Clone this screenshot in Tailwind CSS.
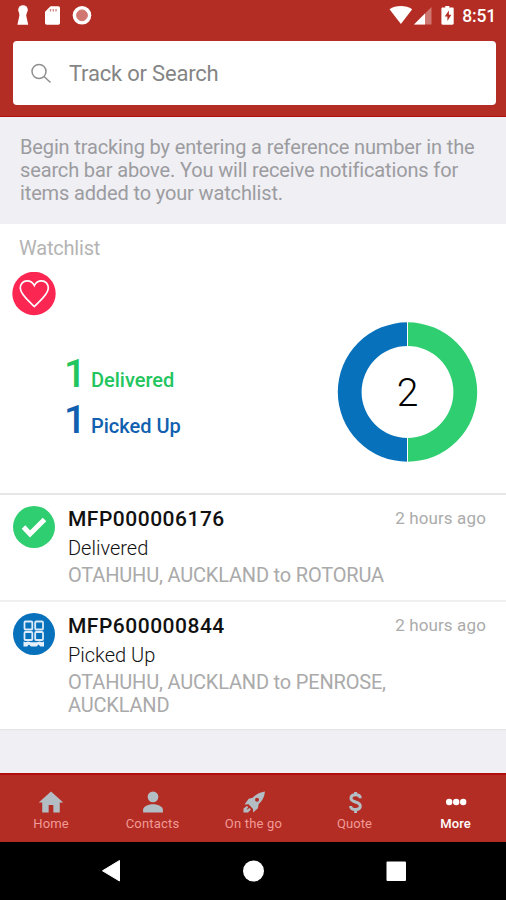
<!DOCTYPE html>
<html lang="en">
<head>
<meta charset="utf-8">
<title>Track or Search</title>
<script src="https://cdn.jsdelivr.net/npm/@tailwindcss/browser@4"></script>
</head>
<body class="w-[506px] h-[900px] overflow-hidden flex flex-col bg-[#efeff4] font-['Roboto',sans-serif]">
<header class="h-[117px] shrink-0 bg-[#b42d24] border-b border-[#b00d0c] flex flex-col">
  <div class="h-[41px] flex justify-between text-white">
    <svg class="w-[110px] h-[32px]" viewBox="0 0 110 32" fill="currentColor">
      <circle cx="23" cy="10" r="4.800"/><path d="M19 11h8l-.8 4.500 2 9.200H17.400l2-9.200z"/>
      <path d="M50.500 6.300h7.800a1.700 1.700 0 0 1 1.700 1.700v15a1.700 1.700 0 0 1-1.700 1.700H46.700A1.700 1.700 0 0 1 45 23V11.800z"/>
      <path d="M50.500 9v2.500M53.300 9v2.500M56 9v2.500" stroke="#b42d24" stroke-width="1.300" opacity=".6"/>
      <circle cx="82" cy="15.300" r="9.300"/><circle cx="82" cy="15.300" r="5.400" fill="#cf7770" stroke="#d2756e"/>
    </svg>
    <div class="flex pr-[10px]">
      <svg class="w-[70px] h-[32px]" viewBox="388 0 70 32" fill="currentColor">
        <path d="M390.500 9.200C396.500 4.900 407 4.900 413.200 9.200L401.900 24z"/>
        <path d="M432.500 7v17.500H415z" opacity=".35"/><path d="M426 13.500v11h-11z"/>
        <path d="M446.300 6h4v1.600h3.100c.8 0 1.300.5 1.300 1.200v14.700c0 .7-.5 1.200-1.300 1.200h-9.700c-.8 0-1.300-.5-1.300-1.200V8.800c0-.7.5-1.200 1.300-1.200h2.600z"/>
        <path d="M449.900 10.500l-4.200 6h2.700v4.500l4-6.200h-2.500z" fill="#b42d24"/>
      </svg>
      <div class="pt-[6px] pl-[5px] text-[17.500px] leading-[20px] tracking-[-0.200px] font-medium">8:51</div>
    </div>
  </div>
  <div class="ml-[13px] mr-[10px] h-[64px] rounded-[4px] bg-white flex items-center pl-[17px] text-[#858585] text-[22px] tracking-[-0.200px]">
    <svg class="w-[22px] h-[22px] mr-[17px]" viewBox="0 0 22 22" fill="none" stroke="#8f8f8f" stroke-width="1.500"><circle cx="9" cy="9.500" r="7"/><path d="M14 14.500l6.500 6"/></svg>
    <span>Track or Search</span>
  </div>
</header>
<p class="h-[107px] shrink-0 pt-[19px] pl-[20px] text-[20px] leading-[23px] tracking-[-0.140px] text-[#9c9ca0]">Begin tracking by entering a reference number in the<br>search bar above. You will receive notifications for<br>items added to your watchlist.</p>
<section class="h-[269px] shrink-0 bg-white">
  <h2 class="h-[48px] pt-[12px] pl-[19px] text-[20px] leading-[24px] tracking-[-0.200px] text-[#b4b4b4]">Watchlist</h2>
  <svg class="w-[44px] h-[44px] ml-[12px]" viewBox="0 0 44 44"><circle cx="22" cy="21.500" r="21.700" fill="#fc2653"/><path d="M22.300 34.500C18 30 8.300 22.500 8.300 16.200C8.300 12 11.200 8.800 15 8.800C18.600 8.800 21 10.800 22.300 13.500C23.600 10.800 26 8.800 29.600 8.800C33.400 8.800 36.300 12 36.300 16.200C36.300 22.500 26.600 30 22.300 34.500z" fill="none" stroke="#fff" stroke-width="1.700"/></svg>
  <div class="flex justify-between pl-[64px] pr-[28px]">
    <div class="pt-[35px]">
      <div class="h-[46px] flex items-baseline gap-[7px] text-[#22c55e] font-medium"><span class="text-[39px] leading-[46px] w-[20px]">1</span><span class="text-[20px]">Delivered</span></div>
      <div class="h-[46px] flex items-baseline gap-[7px] text-[#1160b0] font-medium"><span class="text-[39px] leading-[46px] w-[20px]">1</span><span class="text-[20px]">Picked Up</span></div>
    </div>
    <svg class="w-[141px] h-[152px]" viewBox="337 316 141 152">
      <path d="M407.500 322.300a69.700 69.700 0 0 0 0 139.400v-23.800a45.900 45.900 0 0 1 0-91.800z" fill="#0871bc"/>
      <path d="M407.500 322.300a69.700 69.700 0 0 1 0 139.400v-23.800a45.900 45.900 0 0 0 0-91.800z" fill="#2fce70"/>
      <path d="M407.500 322v24M407.500 438v24" stroke="#fff"/>
      <text x="407.500" y="406" text-anchor="middle" font-size="39" font-weight="300" fill="#000">2</text>
    </svg>
  </div>
</section>
<article class="h-[107px] shrink-0 bg-white border-t-2 border-[#e6e6e6] flex pl-[12px] pr-[20px]">
  <svg class="w-[44px] h-[44px] mt-[10px] mr-[12px] shrink-0" viewBox="0 0 44 44"><circle cx="22" cy="22" r="21" fill="#2fce70"/><path d="M11.500 22l6.500 7 14.500-14.500" fill="none" stroke="#fff" stroke-width="5"/></svg>
  <div class="grow pt-[10px]">
    <div class="flex justify-between"><h3 class="text-[21px] leading-[28px] tracking-[0.500px] font-medium text-[#111]">MFP000006176</h3><span class="text-[17px] leading-[26px] tracking-[0.130px] text-[#ababab]">2 hours ago</span></div>
    <div class="text-[20px] leading-[30px] font-light text-[#111]">Delivered</div>
    <div class="text-[20px] leading-[23px] mt-[1px] tracking-[-0.180px] text-[#aaa]">OTAHUHU, AUCKLAND to ROTORUA</div>
  </div>
</article>
<article class="h-[129px] shrink-0 bg-white border-t-2 border-[#efefef] flex pl-[12px] pr-[20px] shadow-[0_1px_1px_#e4e4e8]">
  <svg class="w-[44px] h-[44px] mt-[10px] mr-[12px] shrink-0" viewBox="0 0 44 44"><circle cx="22" cy="22" r="21" fill="#0871bc"/><g fill="none" stroke="#dcebf7" stroke-width="1.800"><rect x="12.500" y="9.500" width="7.800" height="8" rx="1"/><rect x="23.200" y="9.500" width="7.800" height="8" rx="1"/><rect x="12.500" y="20" width="7.800" height="8" rx="1"/><rect x="23.200" y="20" width="7.800" height="8" rx="1"/></g><path d="M11.500 29.500l2 .8 2.500-.8 2.800.8h6l2.700-.8 2.500.8 2-.8v5h-3.500l-2-2-2 2h-5.500l-2-2-2 2h-3.500z" fill="#e4f0fa"/></svg>
  <div class="grow pt-[10px]">
    <div class="flex justify-between"><h3 class="text-[21px] leading-[28px] tracking-[0.500px] font-medium text-[#111]">MFP600000844</h3><span class="text-[17px] leading-[26px] tracking-[0.130px] text-[#ababab]">2 hours ago</span></div>
    <div class="text-[20px] leading-[30px] font-light text-[#111]">Picked Up</div>
    <div class="text-[20px] leading-[23px] mt-[1px] tracking-[-0.180px] text-[#aaa]">OTAHUHU, AUCKLAND to PENROSE,<br>AUCKLAND</div>
  </div>
</article>
<nav class="mt-auto h-[69px] shrink-0 bg-[#b42d24] border-t-2 border-[#b00d0c] flex text-[13px] leading-[16px] text-[#f19a96] text-center">
  <div class="w-[102px] flex flex-col items-center pt-[13px]"><svg class="w-[28px] h-[28px]" viewBox="0 0 24 24" fill="#b3bec4"><path d="M10 21v-6.500h4V21h5.500v-8.500h3L12 3 1.500 12.500h3V21z"/></svg><span class="tracking-[0.100px]">Home</span></div>
  <div class="w-[101px] flex flex-col items-center pt-[13px]"><svg class="w-[28px] h-[28px]" viewBox="0 0 24 24" fill="#b3bec4"><circle cx="12" cy="7.600" r="4.600"/><path d="M3.500 21v-2.500c0-3 5.500-4.600 8.500-4.600s8.500 1.600 8.500 4.600V21z"/></svg><span class="tracking-[0.200px]">Contacts</span></div>
  <div class="w-[101px] flex flex-col items-center pt-[13px]"><svg class="w-[28px] h-[28px]" viewBox="0 0 28 28" fill="#b3bec4"><path fill-rule="evenodd" d="M25 3.500c-5.500.8-9.500 3-12.300 6.300l-4 1-4.200 5.700 4-.3L13 21l.2 3.500 4.700-4.200.8-4.300C22 13.500 24.300 9.500 25 3.500zM17 9.800a2 2 0 1 1 0 4 2 2 0 0 1 0-4z"/><path d="M6.800 18l1.500 1-2 3 3.500-2 1 1.500-2.800 3H3.500v-4z"/></svg><span class="tracking-[0.200px]">On the go</span></div>
  <div class="w-[101px] flex flex-col items-center pt-[13px]"><svg class="w-[28px] h-[28px]" viewBox="0 0 28 28" fill="none" stroke="#b3bec4" stroke-width="3"><path d="M19.300 10.300C19.300 7.800 17.300 6.800 14.600 6.800C11.800 6.800 10 8.100 10 10.300C10 15.300 19.300 12.800 19.300 18.300C19.300 20.500 17.300 21.500 14.600 21.500C11.600 21.500 9.600 20.500 9.600 18M14.600 4v3.500M14.600 21v4"/></svg><span class="tracking-[0.100px]">Quote</span></div>
  <div class="w-[101px] flex flex-col items-center pt-[13px] text-white font-medium"><svg class="w-[28px] h-[28px]" viewBox="0 0 28 28" fill="#fff"><circle cx="7.200" cy="14" r="3.200"/><circle cx="14.200" cy="14" r="3.200"/><circle cx="21.200" cy="14" r="3.200"/></svg><span class="tracking-[0.100px]">More</span></div>
</nav>
<footer class="h-[58px] shrink-0 bg-black">
  <svg class="w-full h-full" viewBox="0 842 506 58" fill="#fff"><path d="M119.500 860.500v20.500L102.500 870.800z" stroke="#fff" stroke-linejoin="round"/><circle cx="253.500" cy="871" r="10.500"/><rect x="386.500" y="861.500" width="19.500" height="19.500" rx="1"/></svg>
</footer>
</body>
</html>
